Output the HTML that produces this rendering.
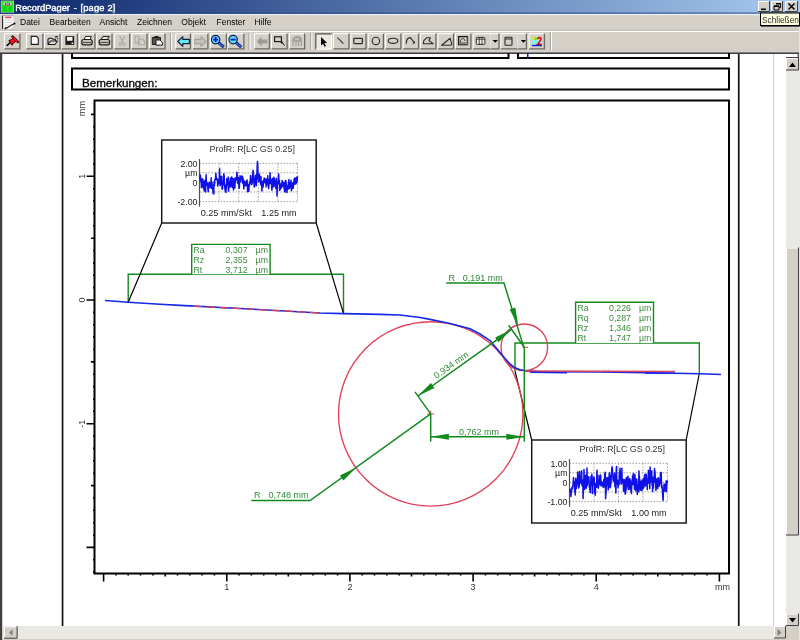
<!DOCTYPE html><html><head><meta charset="utf-8"><title>RecordPager</title><style>
*{margin:0;padding:0;box-sizing:border-box}
html,body{width:800px;height:640px;overflow:hidden;background:#d4d0c8;font-family:"Liberation Sans",sans-serif}
svg{position:absolute;left:0;top:0;will-change:transform}
</style></head><body><svg width="800" height="640" viewBox="0 0 800 640" font-family="Liberation Sans, sans-serif"><defs><linearGradient id="tg" x1="0" x2="1" y1="0" y2="0"><stop offset="0" stop-color="#0a246a"/><stop offset="1" stop-color="#a6caf0"/></linearGradient><pattern id="chk" width="2" height="2" patternUnits="userSpaceOnUse"><rect width="2" height="2" fill="#eeede9"/><rect width="1" height="1" fill="#e6e4df"/><rect x="1" y="1" width="1" height="1" fill="#e6e4df"/></pattern></defs><rect x="0" y="0" width="800" height="14" fill="url(#tg)"/><rect x="1.2" y="1" width="12.4" height="11.6" fill="#18e018" stroke="#a8e0a8" stroke-width="0.9"/><ellipse cx="5.2" cy="3.8" rx="2" ry="1.3" fill="#f0e4ec"/><ellipse cx="9.8" cy="3.8" rx="2" ry="1.3" fill="#f0e4ec"/><circle cx="5.6" cy="3.9" r="0.9" fill="#302838"/><circle cx="9.4" cy="3.9" r="0.9" fill="#302838"/><path d="M4.6 5.6 H10.4" stroke="#d05070" stroke-width="0.9"/><path d="M3.6 8 h2 M9 8 h2 M4.6 10.6 h1.4 M9 10.6 h1.4" stroke="#0a9a40" stroke-width="1"/><g fill="#fff" stroke="#fff" stroke-width="0.4" font-size="9.3"><text x="15.2" y="10.6">RecordPager</text><text x="73.8" y="10.6">-</text><text x="80.4" y="10.6" letter-spacing="0.2">[page 2]</text></g><rect x="0" y="14" width="800" height="16" fill="#d4d0c8"/><rect x="0" y="12.6" width="800" height="0.9" fill="#2a4a88"/><rect x="0" y="14" width="800" height="1.2" fill="#eceef2"/><path d="M2.6 15.5 H13.6 V26 L10 29 H2.6 Z" fill="#fcfcfc"/><path d="M2.6 15.5 V29" stroke="#303030" stroke-width="1.2"/><path d="M2.6 15.3 H13.8" stroke="#909090" stroke-width="0.8"/><rect x="5" y="16.6" width="6.4" height="1.6" fill="#f04060"/><path d="M4.6 20 H12 M4.6 22.6 H12 M4.6 25 H10" stroke="#c8c8c8" stroke-width="0.8"/><path d="M5.2 28.4 L7.8 27.4 L12.4 24.6 L14.8 23.4" stroke="#202020" stroke-width="1.2" fill="none"/><circle cx="14.6" cy="23.4" r="0.9" fill="#000"/><circle cx="5.4" cy="28.4" r="0.9" fill="#000"/><text x="20" y="25" font-size="8.5" fill="#000">Datei</text><text x="49.5" y="25" font-size="8.5" fill="#000">Bearbeiten</text><text x="99.5" y="25" font-size="8.5" fill="#000">Ansicht</text><text x="137" y="25" font-size="8.5" fill="#000">Zeichnen</text><text x="181.3" y="25" font-size="8.5" fill="#000">Objekt</text><text x="216.5" y="25" font-size="8.5" fill="#000">Fenster</text><text x="254.6" y="25" font-size="8.5" fill="#000">Hilfe</text><rect x="0" y="29.5" width="800" height="1.2" fill="#c2beb6"/><rect x="0" y="31" width="800" height="1" fill="#fff"/><path d="M4.4 49.0 V33.7 H19.5" stroke="#fff" stroke-width="1" fill="none"/><path d="M4.4 48.9 H19.9 V33.7" stroke="#6a6864" stroke-width="1.3" fill="none"/><path d="M7.2 45.4 L10.8 42" stroke="#000" stroke-width="1.6" stroke-linecap="round"/><path d="M8.8 40.6 L11.6 39.4 L13.4 37.4 L15.6 38.8 L17 41 L15.6 41.6 L13.4 43.2 L12.2 45.2 Z" fill="#ee1020" stroke="#200" stroke-width="0.9" stroke-linejoin="round"/><path d="M12.6 36.6 L17.8 41.8" stroke="#200" stroke-width="2.6" stroke-linecap="round"/><path d="M13 37.2 L17.2 41.4" stroke="#ff2030" stroke-width="1.4" stroke-linecap="round"/><path d="M26.5 49.0 V33.7 H42.5" stroke="#fff" stroke-width="1" fill="none"/><path d="M26.5 48.9 H42.9 V33.7" stroke="#6a6864" stroke-width="1.3" fill="none"/><path d="M31.2 36.4 H36.4 L38.3 38.3 V44.4 H31.2 Z" fill="#fff" stroke="#1c1c1c" stroke-width="1.1"/><path d="M44.5 49.0 V33.7 H59.6" stroke="#fff" stroke-width="1" fill="none"/><path d="M44.5 48.9 H60.0 V33.7" stroke="#6a6864" stroke-width="1.3" fill="none"/><path d="M48 44.5 V39.2 L49.5 38.3 H52 L53 39.3 H55.5 V41 M48 44.5 L50.5 41 H57.5 L55 44.5 Z" fill="#ddd" stroke="#1c1c1c" stroke-width="1.1" stroke-linejoin="round"/><path d="M55 37.2 L57.8 36.4 M57.2 38.6 l1 0" stroke="#1c1c1c" stroke-width="1.3"/><path d="M61.8 49.0 V33.7 H77.0" stroke="#fff" stroke-width="1" fill="none"/><path d="M61.8 48.9 H77.4 V33.7" stroke="#6a6864" stroke-width="1.3" fill="none"/><rect x="65.4" y="36.2" width="8.8" height="8.7" fill="#1c1c1c"/><rect x="67" y="37" width="5.5" height="3.8" fill="#f4f4f4"/><rect x="71.6" y="42.6" width="1.6" height="1.4" fill="#fff"/><path d="M79.5 49.0 V33.7 H94.5" stroke="#fff" stroke-width="1" fill="none"/><path d="M79.5 48.9 H94.9 V33.7" stroke="#6a6864" stroke-width="1.3" fill="none"/><path d="M84.2 39.5 L85.6 36.4 H91.4 L90 39.5 Z" fill="#fff" stroke="#1c1c1c" stroke-width="1"/><rect x="81.8" y="39.5" width="10.4" height="5.3" rx="2" fill="#c8c6c0" stroke="#1c1c1c" stroke-width="1.2"/><path d="M83 42.4 H91" stroke="#1c1c1c" stroke-width="0.8"/><path d="M96.8 49.0 V33.7 H111.6" stroke="#fff" stroke-width="1" fill="none"/><path d="M96.8 48.9 H112.0 V33.7" stroke="#6a6864" stroke-width="1.3" fill="none"/><path d="M101 39.5 L103 36.4 H109.4 L107.4 39.5 Z" fill="#ddd" stroke="#1c1c1c" stroke-width="1"/><rect x="99.2" y="39.5" width="10.4" height="5.3" rx="2" fill="#c8c6c0" stroke="#1c1c1c" stroke-width="1.2"/><path d="M100.4 42.4 H108.4" stroke="#1c1c1c" stroke-width="0.8"/><path d="M114.4 49.0 V33.7 H129.3" stroke="#fff" stroke-width="1" fill="none"/><path d="M114.4 48.9 H129.7 V33.7" stroke="#6a6864" stroke-width="1.3" fill="none"/><path d="M119.6 36 L123.4 43 M124.8 36 L121 43" stroke="#a8a6a0" stroke-width="1.1"/><circle cx="120.2" cy="44.3" r="1.3" fill="none" stroke="#a8a6a0" stroke-width="1"/><circle cx="124.2" cy="44.3" r="1.3" fill="none" stroke="#a8a6a0" stroke-width="1"/><path d="M131.7 49.0 V33.7 H146.6" stroke="#fff" stroke-width="1" fill="none"/><path d="M131.7 48.9 H147.0 V33.7" stroke="#6a6864" stroke-width="1.3" fill="none"/><path d="M135 36.2 H139 V43 H135 Z M138.5 39 H142.5 L144.6 41 V44.8 H138.5 Z" fill="none" stroke="#a8a6a0" stroke-width="1.1"/><path d="M149.5 49.0 V33.7 H164.6" stroke="#fff" stroke-width="1" fill="none"/><path d="M149.5 48.9 H165.0 V33.7" stroke="#6a6864" stroke-width="1.3" fill="none"/><path d="M152.3 37.5 H160.5 V44.5 H152.3 Z" fill="#555" stroke="#1c1c1c" stroke-width="1"/><rect x="154.5" y="36" width="4" height="2.2" fill="#1c1c1c"/><path d="M156 40 H160 L162.4 42.4 V45.2 H156 Z" fill="#f4f4f4" stroke="#1c1c1c" stroke-width="1"/><rect x="170.1" y="33" width="1" height="17" fill="#9c9890"/><rect x="171.1" y="33" width="1" height="17" fill="#fff"/><path d="M175.7 49.0 V33.7 H190.0" stroke="#fff" stroke-width="1" fill="none"/><path d="M175.7 48.9 H190.4 V33.7" stroke="#6a6864" stroke-width="1.3" fill="none"/><path d="M177.8 41.5 L182.8 36.6 V39.4 H189.4 V43.6 H182.8 V46.4 Z" fill="#62e8f0" stroke="#0c1c40" stroke-width="1.1" stroke-linejoin="round"/><path d="M193.0 49.0 V33.7 H207.5" stroke="#fff" stroke-width="1" fill="none"/><path d="M193.0 48.9 H207.9 V33.7" stroke="#6a6864" stroke-width="1.3" fill="none"/><path d="M206 41.5 L201 36.6 V39.4 H194.6 V43.6 H201 V46.4 Z" fill="#c4c2bc" stroke="#a4a29c" stroke-width="1.1" stroke-linejoin="round"/><path d="M210.5 49.0 V33.7 H226.0" stroke="#fff" stroke-width="1" fill="none"/><path d="M210.5 48.9 H226.4 V33.7" stroke="#6a6864" stroke-width="1.3" fill="none"/><path d="M218.6 42.6 L223.8 47.2" stroke="#0a1a60" stroke-width="3"/><path d="M219.0 43.0 L223.4 46.8" stroke="#3a6af0" stroke-width="1.5"/><circle cx="215.6" cy="39.6" r="4.2" fill="#5ee0e8" stroke="#0a1a60" stroke-width="1.2"/><path d="M213.1 39.6 h5 M215.6 37.1 v5" stroke="#0010e0" stroke-width="1.8"/><path d="M228.0 49.0 V33.7 H243.5" stroke="#fff" stroke-width="1" fill="none"/><path d="M228.0 48.9 H243.9 V33.7" stroke="#6a6864" stroke-width="1.3" fill="none"/><path d="M236.1 42.6 L241.3 47.2" stroke="#0a1a60" stroke-width="3"/><path d="M236.5 43.0 L240.9 46.8" stroke="#3a6af0" stroke-width="1.5"/><circle cx="233.1" cy="39.6" r="4.2" fill="#5ee0e8" stroke="#0a1a60" stroke-width="1.2"/><path d="M230.6 39.6 h5" stroke="#0010e0" stroke-width="1.8"/><rect x="248.5" y="33" width="1" height="17" fill="#9c9890"/><rect x="249.5" y="33" width="1" height="17" fill="#fff"/><path d="M254.4 49.0 V33.7 H269.0" stroke="#fff" stroke-width="1" fill="none"/><path d="M254.4 48.9 H269.4 V33.7" stroke="#6a6864" stroke-width="1.3" fill="none"/><path d="M256.8 41.4 L261.6 36.6 V39.4 H267.4 V43.4 H261.6 V46.2 Z" fill="#9c9a94"/><path d="M271.5 49.0 V33.7 H286.7" stroke="#fff" stroke-width="1" fill="none"/><path d="M271.5 48.9 H287.1 V33.7" stroke="#6a6864" stroke-width="1.3" fill="none"/><rect x="274.6" y="36.8" width="6.8" height="4.8" fill="none" stroke="#111" stroke-width="1.1"/><path d="M281 41 L284.6 45.6" stroke="#111" stroke-width="1"/><path d="M280.6 41.6 l2.6 0.4 l-2 2 z" fill="#111"/><path d="M289.5 49.0 V33.7 H304.3" stroke="#fff" stroke-width="1" fill="none"/><path d="M289.5 48.9 H304.7 V33.7" stroke="#6a6864" stroke-width="1.3" fill="none"/><path d="M293 40 Q293 36.6 297.2 36.6 Q301.4 36.6 301.4 40 V41 H293 Z M293 41.6 V46 M296 41.6 V46 M298.6 41.6 V46 M301.4 41.6 V46" fill="#a4a29c" stroke="#a4a29c" stroke-width="1.3"/><rect x="295" y="38.6" width="4" height="1.2" fill="#d4d0c8"/><rect x="310.3" y="33" width="1" height="17" fill="#9c9890"/><rect x="311.3" y="33" width="1" height="17" fill="#fff"/><rect x="315.2" y="33.2" width="16.8" height="16.3" fill="#ebe9e4"/><path d="M315.8 49.5 V33.8 H332.0" stroke="#505050" stroke-width="1.2" fill="none"/><path d="M316.2 49.0 H331.5 V34.2" stroke="#fff" stroke-width="1" fill="none"/><path d="M321 37 V45.6 L322.9 43.7 L324.6 46.8 L326 46 L324.4 43 H327.2 Z" fill="#000"/><path d="M333.5 49.0 V33.7 H348.6" stroke="#fff" stroke-width="1" fill="none"/><path d="M333.5 48.9 H349.0 V33.7" stroke="#6a6864" stroke-width="1.3" fill="none"/><path d="M337.4 37.6 L343.4 43.6" stroke="#333" stroke-width="1.1"/><path d="M350.9 49.0 V33.7 H365.6" stroke="#fff" stroke-width="1" fill="none"/><path d="M350.9 48.9 H366.0 V33.7" stroke="#6a6864" stroke-width="1.3" fill="none"/><rect x="353.8" y="38.3" width="8.6" height="5.3" rx="0.8" fill="none" stroke="#2a2a2a" stroke-width="1.2"/><path d="M368.4 49.0 V33.7 H383.0" stroke="#fff" stroke-width="1" fill="none"/><path d="M368.4 48.9 H383.4 V33.7" stroke="#6a6864" stroke-width="1.3" fill="none"/><circle cx="375.9" cy="40.9" r="3.7" fill="none" stroke="#2a2a2a" stroke-width="1.1"/><path d="M385.5 49.0 V33.7 H400.5" stroke="#fff" stroke-width="1" fill="none"/><path d="M385.5 48.9 H400.9 V33.7" stroke="#6a6864" stroke-width="1.3" fill="none"/><ellipse cx="393" cy="40.8" rx="4.8" ry="2.6" fill="none" stroke="#2a2a2a" stroke-width="1.1"/><path d="M403.3 49.0 V33.7 H418.2" stroke="#fff" stroke-width="1" fill="none"/><path d="M403.3 48.9 H418.6 V33.7" stroke="#6a6864" stroke-width="1.3" fill="none"/><path d="M406.4 43.6 Q406 38 410.4 37.6 L414.6 43 M414.6 43 l-0.6 -1.8 M414.6 43 l-1.8 0.4" fill="none" stroke="#2a2a2a" stroke-width="1.1"/><path d="M420.5 49.0 V33.7 H435.5" stroke="#fff" stroke-width="1" fill="none"/><path d="M420.5 48.9 H435.9 V33.7" stroke="#6a6864" stroke-width="1.3" fill="none"/><path d="M423.4 43.8 L423.8 40.6 L426.6 37.8 H430.4 L429 40.6 L433.2 43.8 Z" fill="none" stroke="#2a2a2a" stroke-width="1.1" stroke-linejoin="round"/><path d="M438.0 49.0 V33.7 H453.1" stroke="#fff" stroke-width="1" fill="none"/><path d="M438.0 48.9 H453.5 V33.7" stroke="#6a6864" stroke-width="1.3" fill="none"/><path d="M441.6 45.3 L450.2 38.3 L451.8 44.2 L451 45.3 Z" fill="none" stroke="#2a2a2a" stroke-width="1.1" stroke-linejoin="round"/><path d="M455.5 49.0 V33.7 H470.5" stroke="#fff" stroke-width="1" fill="none"/><path d="M455.5 48.9 H470.9 V33.7" stroke="#6a6864" stroke-width="1.3" fill="none"/><rect x="458.6" y="36.6" width="8.8" height="8" fill="none" stroke="#1a1a1a" stroke-width="1.3"/><path d="M460 42.8 Q460.4 38.4 462.6 38.4 Q464.6 38.4 465 41 M460 43 H466" fill="none" stroke="#333" stroke-width="0.9"/><path d="M459.3 44.9 H467.8 V37" stroke="#777" stroke-width="0.8" fill="none"/><path d="M473.2 49.0 V33.7 H498.6" stroke="#fff" stroke-width="1" fill="none"/><path d="M473.2 48.9 H499.0 V33.7" stroke="#6a6864" stroke-width="1.3" fill="none"/><rect x="476.3" y="37.4" width="8.6" height="7" rx="1" fill="#f2f2f2" stroke="#2a2a2a" stroke-width="1"/><path d="M476.3 39.2 H484.9 M479.2 37.4 V44.4 M482 37.4 V44.4" stroke="#2a2a2a" stroke-width="0.9"/><rect x="490.2" y="34" width="0.8" height="15" fill="#e6e4de"/><path d="M492.6 40 H497.9 L495.25 42.8 Z" fill="#000"/><path d="M500.9 49.0 V33.7 H526.0" stroke="#fff" stroke-width="1" fill="none"/><path d="M500.9 48.9 H526.4 V33.7" stroke="#6a6864" stroke-width="1.3" fill="none"/><rect x="505" y="37.2" width="7" height="8" rx="0.8" fill="none" stroke="#2a2a2a" stroke-width="1.1"/><path d="M505 39 H512" stroke="#2a2a2a" stroke-width="1"/><rect x="517.4" y="34" width="0.8" height="15" fill="#e6e4de"/><path d="M520.8 40 H526.1 L523.45 42.8 Z" fill="#000"/><path d="M529.1 49.0 V33.7 H544.0" stroke="#fff" stroke-width="1" fill="none"/><path d="M529.1 48.9 H544.4 V33.7" stroke="#6a6864" stroke-width="1.3" fill="none"/><rect x="532" y="37.6" width="10" height="7.2" fill="#8ef0f0"/><path d="M532.4 37.6 Q535 36.4 537.8 38 L536 40.6 Q533.6 40 532.4 39 Z" fill="#8ed020"/><circle cx="533.6" cy="38.2" r="1.2" fill="#f0f020"/><path d="M537.4 39 Q539.6 36.4 541 38.2 Q541.4 40 537.6 44.2 H541.6" fill="none" stroke="#e01010" stroke-width="1.6"/><rect x="532" y="44.8" width="10" height="1.4" fill="#1020d0"/><rect x="551" y="32" width="1" height="19" fill="#fff"/><rect x="550" y="32" width="1" height="19" fill="#a8a49c"/><rect x="0" y="52" width="800" height="1" fill="#808080"/><rect x="0" y="53" width="800" height="573" fill="#fff"/><rect x="0" y="53" width="2" height="587" fill="#404040"/><rect x="2" y="53" width="1" height="587" fill="#d4d0c8"/><rect x="0" y="53" width="800" height="1" fill="#404040"/><rect x="773" y="54" width="1" height="572" fill="#d4d0c8"/><rect x="61.7" y="54" width="1.7" height="572" fill="#111"/><rect x="737.9" y="54" width="1.7" height="572" fill="#111"/><path d="M72 53 V58 H508.5 V53" fill="none" stroke="#000" stroke-width="2"/><path d="M518 53 V58 H729 V53" fill="none" stroke="#000" stroke-width="2"/><rect x="527" y="53" width="1.5" height="5.5" fill="#1010c0"/><rect x="72" y="68.5" width="657" height="21" fill="none" stroke="#000" stroke-width="2"/><text x="82" y="86.8" font-size="11.6" fill="#000" stroke="#000" stroke-width="0.3">Bemerkungen:</text><path d="M94.5 100.5 H729 V573.5 H94.5 Z" fill="none" stroke="#000" stroke-width="2"/><path d="M103.6 573.5 v8 M115.9 573.5 v2 M128.2 573.5 v2 M140.5 573.5 v2 M152.9 573.5 v2 M165.2 573.5 v3 M177.5 573.5 v2 M189.8 573.5 v2 M202.1 573.5 v2 M214.4 573.5 v2 M226.8 573.5 v8 M239.1 573.5 v2 M251.4 573.5 v2 M263.7 573.5 v2 M276.0 573.5 v2 M288.3 573.5 v3 M300.6 573.5 v2 M313.0 573.5 v2 M325.3 573.5 v2 M337.6 573.5 v2 M349.9 573.5 v8 M362.2 573.5 v2 M374.5 573.5 v2 M386.8 573.5 v2 M399.2 573.5 v2 M411.5 573.5 v3 M423.8 573.5 v2 M436.1 573.5 v2 M448.4 573.5 v2 M460.7 573.5 v2 M473.1 573.5 v8 M485.4 573.5 v2 M497.7 573.5 v2 M510.0 573.5 v2 M522.3 573.5 v2 M534.6 573.5 v3 M546.9 573.5 v2 M559.3 573.5 v2 M571.6 573.5 v2 M583.9 573.5 v2 M596.2 573.5 v8 M608.5 573.5 v2 M620.8 573.5 v2 M633.1 573.5 v2 M645.5 573.5 v2 M657.8 573.5 v3 M670.1 573.5 v2 M682.4 573.5 v2 M694.7 573.5 v2 M707.0 573.5 v2 M719.4 573.5 v8 M94.5 572.1 h-1.5 M94.5 559.8 h-1.5 M94.5 547.4 h-8 M94.5 535.0 h-1.5 M94.5 522.7 h-1.5 M94.5 510.3 h-1.5 M94.5 497.9 h-1.5 M94.5 485.6 h-3.5 M94.5 473.2 h-1.5 M94.5 460.8 h-1.5 M94.5 448.4 h-1.5 M94.5 436.1 h-1.5 M94.5 423.7 h-8 M94.5 411.3 h-1.5 M94.5 399.0 h-1.5 M94.5 386.6 h-1.5 M94.5 374.2 h-1.5 M94.5 361.9 h-3.5 M94.5 349.5 h-1.5 M94.5 337.1 h-1.5 M94.5 324.7 h-1.5 M94.5 312.4 h-1.5 M94.5 300.0 h-8 M94.5 287.6 h-1.5 M94.5 275.3 h-1.5 M94.5 262.9 h-1.5 M94.5 250.5 h-1.5 M94.5 238.2 h-3.5 M94.5 225.8 h-1.5 M94.5 213.4 h-1.5 M94.5 201.0 h-1.5 M94.5 188.7 h-1.5 M94.5 176.3 h-8 M94.5 163.9 h-1.5 M94.5 151.6 h-1.5 M94.5 139.2 h-1.5 M94.5 126.8 h-1.5 M94.5 114.4 h-3.5" stroke="#000" stroke-width="1.6" fill="none"/><text x="226.8" y="590" font-size="9" fill="#333" text-anchor="middle">1</text><text x="349.9" y="590" font-size="9" fill="#333" text-anchor="middle">2</text><text x="473.1" y="590" font-size="9" fill="#333" text-anchor="middle">3</text><text x="596.2" y="590" font-size="9" fill="#333" text-anchor="middle">4</text><text x="722.5" y="590" font-size="9" fill="#333" text-anchor="middle">mm</text><text transform="translate(85 176.3) rotate(-90)" font-size="9" fill="#333" text-anchor="middle">1</text><text transform="translate(85 300.0) rotate(-90)" font-size="9" fill="#333" text-anchor="middle">0</text><text transform="translate(85 423.7) rotate(-90)" font-size="9" fill="#333" text-anchor="middle">-1</text><text transform="translate(85.2 108.5) rotate(-90)" font-size="9.2" fill="#333" text-anchor="middle">mm</text><path d="M128.2 302.3 V274.2 H343.5 V313.4" fill="none" stroke="#128a1c" stroke-width="1.4"/><path d="M515 371 V343 H699.3 V373.5" fill="none" stroke="#128a1c" stroke-width="1.4"/><path d="M128.2 302.3 L161.7 223 M343.5 313.4 L316.2 223 M515 371 L531.7 440 M699.3 373.5 L686.2 440" stroke="#000" stroke-width="1.2" fill="none"/><circle cx="430.7" cy="413.9" r="92.2" fill="none" stroke="#e0405a" stroke-width="1.35"/><circle cx="524.3" cy="347.3" r="23.3" fill="none" stroke="#e0405a" stroke-width="1.35"/><path d="M105.0 300.5 L128.0 302.3 L160.0 304.3 L180.0 305.4 L250.0 309.0 L320.0 313.0 L343.0 313.6 L380.0 314.4 L400.0 315.0 L420.0 317.5 L430.0 319.4 L450.0 323.5 L470.0 328.8 L480.0 334.0 L490.0 340.6 L500.0 352.5 L505.0 358.5 L510.0 364.0 L515.0 367.8 L520.0 369.8 L526.0 370.8 L540.0 371.8 L600.0 372.0 L660.0 373.0 L700.0 373.8 L721.0 374.5" fill="none" stroke="#1428e6" stroke-width="1.6" stroke-linejoin="round"/><path d="M193 306.1 L319.5 312.9" stroke="#e0405a" stroke-width="1.3" stroke-dasharray="9 4"/><path d="M524 371.1 L675 371.6" stroke="#e0405a" stroke-width="1.5"/><path d="M530 372.4 L567 372.7 M645 373 L675 373.2" stroke="#1428e6" stroke-width="1.4"/><path d="M603 370 h1 M605.5 370 h1 M608 370 h1" stroke="#888" stroke-width="0.8"/><path d="M427.2 413.9 h7 M430.7 410.6 v3 M522.5 347.3 h5.5" stroke="#e0405a" stroke-width="1"/><path d="M446.2 283 H504 L523.6 346.6" fill="none" stroke="#128a1c" stroke-width="1.5"/><path d="M518.2 325.5 L509.7 309.4 L515.3 307.5 Z" fill="#128a1c"/><text x="448.5" y="280.5" font-size="9" fill="#2f8a35">R</text><text x="462.8" y="280.5" font-size="9" fill="#2f8a35">0,191 mm</text><path d="M430.7 413.9 L415.0 391.9 M524.3 347.3 L508.6 325.3 M417.9 396.0 L511.5 329.4" stroke="#128a1c" stroke-width="1.5" fill="none"/><path d="M417.9 396.0 L430.9 383.1 L434.4 388.0 Z" fill="#128a1c"/><path d="M511.5 329.4 L498.6 342.3 L495.1 337.4 Z" fill="#128a1c"/><text transform="translate(452.9 367.4) rotate(-35.43)" font-size="9" fill="#2f8a35" text-anchor="middle">0,934 mm</text><path d="M430.7 413.9 V441.6 M524.3 347.3 V441.6 M430.7 436.8 H524.3" stroke="#128a1c" stroke-width="1.5" fill="none"/><path d="M430.9 436.8 L448.9 433.8 L448.9 439.8 Z" fill="#128a1c"/><path d="M524.3 436.8 L506.3 439.8 L506.3 433.8 Z" fill="#128a1c"/><text x="479" y="434.5" font-size="9" fill="#2f8a35" text-anchor="middle">0,762 mm</text><path d="M251.3 500.5 H310 L430.7 413.9" fill="none" stroke="#128a1c" stroke-width="1.5"/><path d="M356.3 467.5 L343.4 480.4 L339.9 475.5 Z" fill="#128a1c"/><text x="254" y="497.5" font-size="9" fill="#2f8a35">R</text><text x="268.5" y="497.5" font-size="9" fill="#2f8a35">0,748 mm</text><path d="M191.7 274.2 V244.4 H270.1 V274.2" fill="#fff" stroke="#128a1c" stroke-width="1.4"/><text x="193.5" y="253.4" font-size="8.8" fill="#3f8a3f">Ra</text><text x="247.6" y="253.4" font-size="8.8" fill="#3f8a3f" text-anchor="end">0,307</text><text x="255.6" y="253.4" font-size="8.8" fill="#3f8a3f">µm</text><text x="193.5" y="263.2" font-size="8.8" fill="#3f8a3f">Rz</text><text x="247.6" y="263.2" font-size="8.8" fill="#3f8a3f" text-anchor="end">2,355</text><text x="255.6" y="263.2" font-size="8.8" fill="#3f8a3f">µm</text><text x="193.5" y="273.0" font-size="8.8" fill="#3f8a3f">Rt</text><text x="247.6" y="273.0" font-size="8.8" fill="#3f8a3f" text-anchor="end">3,712</text><text x="255.6" y="273.0" font-size="8.8" fill="#3f8a3f">µm</text><path d="M575.6 343.0 V302.3 H653.5 V343.0" fill="#fff" stroke="#128a1c" stroke-width="1.4"/><text x="577.4" y="311.3" font-size="8.8" fill="#3f8a3f">Ra</text><text x="631.0" y="311.3" font-size="8.8" fill="#3f8a3f" text-anchor="end">0,226</text><text x="639.0" y="311.3" font-size="8.8" fill="#3f8a3f">µm</text><text x="577.4" y="321.1" font-size="8.8" fill="#3f8a3f">Rq</text><text x="631.0" y="321.1" font-size="8.8" fill="#3f8a3f" text-anchor="end">0,287</text><text x="639.0" y="321.1" font-size="8.8" fill="#3f8a3f">µm</text><text x="577.4" y="330.9" font-size="8.8" fill="#3f8a3f">Rz</text><text x="631.0" y="330.9" font-size="8.8" fill="#3f8a3f" text-anchor="end">1,346</text><text x="639.0" y="330.9" font-size="8.8" fill="#3f8a3f">µm</text><text x="577.4" y="340.7" font-size="8.8" fill="#3f8a3f">Rt</text><text x="631.0" y="340.7" font-size="8.8" fill="#3f8a3f" text-anchor="end">1,747</text><text x="639.0" y="340.7" font-size="8.8" fill="#3f8a3f">µm</text><rect x="161.7" y="140.0" width="154.5" height="83" fill="#fff" stroke="#151515" stroke-width="1.45"/><text x="294.9" y="152.3" font-size="8.9" fill="#333" text-anchor="end">ProfR: R[LC GS 0.25]</text><path d="M199.5 163.3 H297.5 M199.5 172.8 H297.5 M199.5 182.5 H297.5 M199.5 192.0 H297.5 M199.5 201.6 H297.5 M219.1 163.3 V202.5 M238.7 163.3 V202.5 M258.3 163.3 V202.5 M277.9 163.3 V202.5 M297.5 163.3 V202.5" stroke="#888" stroke-width="0.8" stroke-dasharray="1.5 1.5" fill="none"/><path d="M199.5 159.0 V206.6" stroke="#505050" stroke-width="1.2"/><text x="197.5" y="166.5" font-size="8.8" fill="#222" text-anchor="end">2.00</text><text x="197.5" y="176.0" font-size="8.8" fill="#222" text-anchor="end">µm</text><text x="197.5" y="185.7" font-size="8.8" fill="#222" text-anchor="end">0</text><text x="197.5" y="204.8" font-size="8.8" fill="#222" text-anchor="end">-2.00</text><path d="M199.8 176.8 L200.0 179.1 L200.3 174.9 L200.5 176.7 L200.7 181.2 L201.0 180.6 L201.2 178.8 L201.4 187.6 L201.7 183.1 L201.9 179.3 L202.1 180.7 L202.4 178.9 L202.6 178.8 L202.8 179.1 L203.1 187.8 L203.3 183.8 L203.5 183.1 L203.8 184.7 L204.0 190.2 L204.2 184.2 L204.5 180.8 L204.7 190.9 L204.9 180.4 L205.2 180.8 L205.4 184.7 L205.6 192.0 L205.8 183.1 L206.1 174.7 L206.3 183.0 L206.5 181.7 L206.8 181.9 L207.0 185.1 L207.2 185.4 L207.5 185.8 L207.7 183.4 L207.9 188.9 L208.2 191.6 L208.4 187.3 L208.6 184.1 L208.9 187.2 L209.1 187.4 L209.3 182.1 L209.6 182.3 L209.8 187.8 L210.0 185.6 L210.3 183.9 L210.5 185.3 L210.7 184.8 L211.0 184.8 L211.2 177.7 L211.4 188.5 L211.7 186.6 L211.9 182.0 L212.1 187.0 L212.4 186.3 L212.6 184.9 L212.8 188.1 L213.1 193.5 L213.3 189.1 L213.5 191.2 L213.8 193.9 L214.0 183.4 L214.2 181.4 L214.5 185.3 L214.7 180.3 L214.9 179.6 L215.2 180.2 L215.4 179.2 L215.6 177.4 L215.9 173.3 L216.1 176.5 L216.3 177.2 L216.5 178.6 L216.8 179.7 L217.0 178.6 L217.2 179.4 L217.5 180.8 L217.7 186.1 L217.9 180.2 L218.2 180.1 L218.4 180.1 L218.6 183.0 L218.9 183.8 L219.1 183.2 L219.3 177.5 L219.6 168.8 L219.8 177.6 L220.0 181.1 L220.3 185.8 L220.5 182.7 L220.7 179.8 L221.0 182.5 L221.2 176.4 L221.4 176.2 L221.7 176.3 L221.9 181.1 L222.1 189.3 L222.4 187.5 L222.6 188.3 L222.8 185.3 L223.1 184.6 L223.3 181.7 L223.5 181.4 L223.8 173.7 L224.0 175.4 L224.2 175.8 L224.5 183.7 L224.7 185.9 L224.9 188.5 L225.2 190.9 L225.4 185.2 L225.6 188.1 L225.9 192.4 L226.1 186.9 L226.3 189.0 L226.6 185.3 L226.8 178.8 L227.0 182.8 L227.2 180.9 L227.5 183.6 L227.7 182.5 L227.9 185.0 L228.2 177.0 L228.4 189.4 L228.6 191.1 L228.9 185.6 L229.1 181.6 L229.3 183.5 L229.6 186.6 L229.8 186.7 L230.0 186.6 L230.3 178.1 L230.5 178.0 L230.7 186.9 L231.0 186.0 L231.2 179.2 L231.4 179.2 L231.7 177.0 L231.9 177.7 L232.1 185.8 L232.4 183.6 L232.6 187.6 L232.8 185.5 L233.1 178.6 L233.3 179.2 L233.5 190.0 L233.8 182.6 L234.0 178.9 L234.2 185.9 L234.5 184.1 L234.7 183.0 L234.9 188.0 L235.2 177.8 L235.4 182.2 L235.6 178.3 L235.9 180.6 L236.1 179.3 L236.3 179.8 L236.6 177.4 L236.8 173.6 L237.0 172.2 L237.3 176.9 L237.5 179.1 L237.7 178.7 L237.9 183.6 L238.2 183.3 L238.4 177.7 L238.6 179.8 L238.9 184.4 L239.1 188.5 L239.3 187.9 L239.6 182.3 L239.8 179.9 L240.0 175.8 L240.3 179.5 L240.5 178.9 L240.7 181.8 L241.0 177.4 L241.2 178.6 L241.4 177.8 L241.7 176.3 L241.9 176.0 L242.1 176.5 L242.4 176.2 L242.6 182.6 L242.8 183.1 L243.1 178.2 L243.3 183.3 L243.5 184.3 L243.8 189.0 L244.0 184.7 L244.2 183.2 L244.5 180.9 L244.7 183.2 L244.9 185.4 L245.2 185.1 L245.4 183.4 L245.6 185.9 L245.9 185.1 L246.1 185.4 L246.3 181.2 L246.6 184.0 L246.8 180.5 L247.0 179.9 L247.3 183.4 L247.5 191.8 L247.7 190.7 L248.0 186.7 L248.2 184.6 L248.4 188.2 L248.7 190.8 L248.9 191.2 L249.1 186.1 L249.3 185.7 L249.6 183.6 L249.8 183.0 L250.0 180.7 L250.3 182.1 L250.5 175.5 L250.7 176.7 L251.0 183.0 L251.2 180.2 L251.4 184.6 L251.7 179.3 L251.9 180.8 L252.1 184.1 L252.4 178.9 L252.6 174.7 L252.8 174.2 L253.1 170.3 L253.3 173.5 L253.5 177.5 L253.8 182.2 L254.0 182.6 L254.2 186.5 L254.5 187.0 L254.7 182.8 L254.9 181.5 L255.2 177.0 L255.4 175.2 L255.6 177.3 L255.9 183.4 L256.1 183.3 L256.3 185.7 L256.6 180.7 L256.8 174.3 L257.0 171.1 L257.3 163.6 L257.5 161.5 L257.7 166.7 L258.0 173.8 L258.2 178.3 L258.4 179.9 L258.7 181.7 L258.9 180.5 L259.1 177.2 L259.4 174.3 L259.6 175.0 L259.8 177.6 L260.0 180.0 L260.3 180.5 L260.5 183.4 L260.7 184.3 L261.0 176.8 L261.2 185.2 L261.4 184.1 L261.7 182.1 L261.9 191.0 L262.1 186.4 L262.4 181.6 L262.6 182.4 L262.8 185.0 L263.1 186.9 L263.3 184.3 L263.5 180.5 L263.8 179.8 L264.0 179.1 L264.2 178.0 L264.5 181.5 L264.7 181.0 L264.9 182.8 L265.2 180.2 L265.4 179.1 L265.6 181.3 L265.9 181.4 L266.1 186.9 L266.3 181.3 L266.6 183.4 L266.8 183.2 L267.0 178.4 L267.3 184.2 L267.5 184.2 L267.7 175.8 L268.0 182.7 L268.2 186.4 L268.4 181.2 L268.7 188.5 L268.9 185.4 L269.1 179.4 L269.4 183.6 L269.6 181.6 L269.8 177.3 L270.1 172.8 L270.3 179.9 L270.5 178.7 L270.7 183.4 L271.0 184.0 L271.2 180.8 L271.4 179.6 L271.7 187.6 L271.9 190.2 L272.1 187.5 L272.4 182.5 L272.6 178.4 L272.8 179.1 L273.1 186.9 L273.3 185.2 L273.5 181.8 L273.8 177.2 L274.0 180.7 L274.2 178.1 L274.5 180.4 L274.7 184.0 L274.9 186.4 L275.2 183.9 L275.4 181.3 L275.6 182.5 L275.9 188.7 L276.1 185.7 L276.3 178.2 L276.6 186.5 L276.8 184.7 L277.0 195.9 L277.3 185.5 L277.5 183.3 L277.7 181.8 L278.0 183.9 L278.2 181.2 L278.4 177.0 L278.7 174.0 L278.9 179.7 L279.1 180.3 L279.4 180.4 L279.6 190.4 L279.8 189.2 L280.1 189.9 L280.3 184.5 L280.5 185.6 L280.8 184.2 L281.0 183.8 L281.2 187.3 L281.4 188.1 L281.7 187.3 L281.9 186.6 L282.1 180.6 L282.4 181.2 L282.6 185.5 L282.8 184.4 L283.1 182.5 L283.3 186.1 L283.5 182.7 L283.8 182.5 L284.0 188.2 L284.2 185.6 L284.5 191.3 L284.7 190.0 L284.9 190.6 L285.2 192.0 L285.4 180.4 L285.6 184.0 L285.9 180.8 L286.1 182.7 L286.3 184.6 L286.6 190.2 L286.8 187.4 L287.0 192.5 L287.3 186.3 L287.5 185.8 L287.7 186.1 L288.0 189.3 L288.2 186.7 L288.4 183.6 L288.7 183.5 L288.9 179.4 L289.1 187.6 L289.4 188.5 L289.6 187.6 L289.8 186.6 L290.1 182.9 L290.3 182.3 L290.5 186.3 L290.8 181.8 L291.0 180.2 L291.2 188.1 L291.5 190.7 L291.7 186.9 L291.9 186.3 L292.1 184.7 L292.4 188.6 L292.6 183.0 L292.8 182.9 L293.1 184.2 L293.3 188.1 L293.5 183.2 L293.8 183.2 L294.0 180.5 L294.2 178.8 L294.5 178.2 L294.7 180.6 L294.9 184.3 L295.2 179.9 L295.4 178.6 L295.6 178.8 L295.9 181.6 L296.1 183.8 L296.3 177.5 L296.6 181.1 L296.8 177.5 L297.0 182.4 L297.3 178.1 L297.5 176.2" fill="none" stroke="#1010e8" stroke-width="1.5" stroke-linejoin="round"/><text x="200.7" y="216.3" font-size="9.1" fill="#222">0.25 mm/Skt</text><text x="296.7" y="216.3" font-size="9.1" fill="#222" text-anchor="end">1.25 mm</text><rect x="531.7" y="440.0" width="154.5" height="83" fill="#fff" stroke="#151515" stroke-width="1.45"/><text x="664.9" y="452.3" font-size="8.9" fill="#333" text-anchor="end">ProfR: R[LC GS 0.25]</text><path d="M569.5 463.3 H667.5 M569.5 472.8 H667.5 M569.5 482.5 H667.5 M569.5 492.0 H667.5 M569.5 501.6 H667.5 M594.0 463.3 V502.5 M618.5 463.3 V502.5 M643.0 463.3 V502.5 M667.5 463.3 V502.5" stroke="#888" stroke-width="0.8" stroke-dasharray="1.5 1.5" fill="none"/><path d="M569.5 459.0 V506.6" stroke="#505050" stroke-width="1.2"/><text x="567.5" y="466.5" font-size="8.8" fill="#222" text-anchor="end">1.00</text><text x="567.5" y="476.0" font-size="8.8" fill="#222" text-anchor="end">µm</text><text x="567.5" y="485.7" font-size="8.8" fill="#222" text-anchor="end">0</text><text x="567.5" y="504.8" font-size="8.8" fill="#222" text-anchor="end">-1.00</text><path d="M569.8 488.8 L570.0 488.8 L570.3 491.1 L570.5 492.0 L570.7 494.1 L571.0 496.4 L571.2 491.6 L571.4 492.3 L571.7 489.6 L571.9 488.6 L572.1 486.9 L572.4 489.1 L572.6 488.4 L572.8 487.0 L573.1 483.8 L573.3 480.7 L573.5 477.6 L573.8 481.8 L574.0 481.8 L574.2 485.7 L574.5 481.7 L574.7 491.4 L574.9 488.9 L575.2 494.9 L575.4 488.0 L575.6 483.1 L575.8 478.2 L576.1 485.1 L576.3 488.7 L576.5 485.4 L576.8 485.5 L577.0 482.1 L577.2 480.1 L577.5 480.1 L577.7 471.9 L577.9 473.5 L578.2 479.6 L578.4 482.1 L578.6 488.0 L578.9 487.7 L579.1 486.6 L579.3 484.3 L579.6 471.5 L579.8 479.0 L580.0 476.8 L580.3 483.2 L580.5 481.4 L580.7 480.6 L581.0 479.2 L581.2 480.0 L581.4 471.7 L581.7 470.7 L581.9 484.8 L582.1 485.7 L582.4 481.5 L582.6 480.5 L582.8 480.1 L583.1 498.6 L583.3 491.0 L583.5 485.6 L583.8 480.2 L584.0 469.6 L584.2 478.7 L584.5 488.4 L584.7 489.4 L584.9 486.2 L585.2 480.6 L585.4 475.6 L585.6 480.3 L585.9 479.4 L586.1 475.3 L586.3 488.2 L586.5 479.3 L586.8 478.1 L587.0 468.1 L587.2 485.8 L587.5 482.2 L587.7 481.4 L587.9 482.9 L588.2 477.5 L588.4 476.7 L588.6 481.1 L588.9 476.9 L589.1 481.2 L589.3 487.3 L589.6 487.1 L589.8 490.3 L590.0 489.6 L590.3 492.8 L590.5 486.4 L590.7 484.8 L591.0 476.4 L591.2 478.1 L591.4 475.9 L591.7 478.5 L591.9 474.3 L592.1 479.9 L592.4 493.6 L592.6 481.0 L592.8 483.6 L593.1 484.8 L593.3 478.2 L593.5 478.1 L593.8 477.0 L594.0 481.6 L594.2 477.7 L594.5 493.1 L594.7 489.6 L594.9 489.8 L595.2 495.3 L595.4 493.2 L595.6 484.8 L595.9 484.4 L596.1 482.7 L596.3 483.3 L596.6 487.3 L596.8 473.4 L597.0 470.3 L597.2 476.3 L597.5 482.5 L597.7 479.9 L597.9 480.6 L598.2 487.7 L598.4 488.1 L598.6 484.3 L598.9 481.9 L599.1 475.2 L599.3 483.1 L599.6 484.0 L599.8 478.9 L600.0 484.7 L600.3 482.4 L600.5 481.8 L600.7 474.9 L601.0 485.7 L601.2 481.0 L601.4 484.9 L601.7 485.9 L601.9 482.3 L602.1 483.6 L602.4 483.2 L602.6 483.0 L602.8 485.3 L603.1 481.8 L603.3 487.4 L603.5 486.5 L603.8 479.5 L604.0 485.2 L604.2 483.0 L604.5 486.7 L604.7 473.4 L604.9 482.6 L605.2 472.3 L605.4 478.0 L605.6 498.8 L605.9 492.9 L606.1 492.7 L606.3 483.4 L606.6 477.9 L606.8 481.3 L607.0 485.0 L607.3 483.5 L607.5 479.8 L607.7 477.4 L607.9 478.9 L608.2 489.9 L608.4 485.2 L608.6 481.5 L608.9 480.6 L609.1 476.6 L609.3 473.0 L609.6 479.5 L609.8 487.8 L610.0 486.2 L610.3 475.8 L610.5 487.0 L610.7 484.4 L611.0 483.0 L611.2 477.8 L611.4 472.1 L611.7 470.8 L611.9 467.8 L612.1 466.8 L612.4 469.7 L612.6 473.2 L612.8 475.5 L613.1 480.6 L613.3 480.7 L613.5 476.9 L613.8 476.0 L614.0 482.1 L614.2 481.6 L614.5 473.1 L614.7 477.6 L614.9 486.8 L615.2 482.5 L615.4 474.9 L615.6 484.7 L615.9 493.1 L616.1 483.8 L616.3 467.9 L616.6 466.6 L616.8 483.7 L617.0 479.0 L617.3 482.0 L617.5 482.3 L617.7 480.5 L618.0 487.8 L618.2 482.8 L618.4 483.2 L618.6 481.9 L618.9 481.3 L619.1 484.8 L619.3 477.4 L619.6 472.6 L619.8 472.6 L620.0 468.2 L620.3 472.5 L620.5 474.1 L620.7 479.7 L621.0 482.2 L621.2 484.2 L621.4 477.9 L621.7 478.9 L621.9 468.2 L622.1 480.8 L622.4 483.0 L622.6 481.9 L622.8 481.8 L623.1 479.6 L623.3 480.6 L623.5 491.3 L623.8 482.1 L624.0 479.6 L624.2 485.0 L624.5 484.6 L624.7 480.1 L624.9 490.5 L625.2 494.3 L625.4 485.3 L625.6 493.5 L625.9 479.6 L626.1 490.2 L626.3 477.4 L626.6 483.5 L626.8 482.9 L627.0 481.6 L627.3 486.4 L627.5 479.8 L627.7 478.6 L628.0 476.3 L628.2 489.3 L628.4 482.9 L628.7 485.7 L628.9 483.6 L629.1 489.6 L629.4 480.8 L629.6 478.6 L629.8 479.0 L630.0 483.6 L630.3 480.1 L630.5 485.4 L630.7 487.7 L631.0 491.1 L631.2 489.6 L631.4 493.6 L631.7 485.9 L631.9 482.3 L632.1 480.1 L632.4 479.3 L632.6 475.7 L632.8 483.4 L633.1 484.6 L633.3 473.4 L633.5 479.9 L633.8 478.9 L634.0 477.6 L634.2 480.4 L634.5 489.2 L634.7 486.5 L634.9 474.4 L635.2 482.4 L635.4 478.8 L635.6 490.8 L635.9 483.8 L636.1 483.4 L636.3 482.6 L636.6 479.0 L636.8 480.0 L637.0 481.8 L637.3 494.5 L637.5 488.1 L637.7 487.8 L638.0 485.6 L638.2 485.3 L638.4 485.9 L638.7 491.8 L638.9 470.9 L639.1 475.7 L639.4 476.3 L639.6 485.3 L639.8 479.8 L640.1 487.0 L640.3 490.3 L640.5 482.8 L640.7 485.9 L641.0 481.6 L641.2 486.8 L641.4 487.0 L641.7 490.5 L641.9 489.8 L642.1 479.9 L642.4 489.3 L642.6 485.1 L642.8 489.0 L643.1 485.2 L643.3 488.2 L643.5 478.2 L643.8 487.8 L644.0 479.0 L644.2 480.2 L644.5 483.8 L644.7 474.7 L644.9 481.3 L645.2 481.7 L645.4 485.9 L645.6 482.6 L645.9 476.6 L646.1 474.0 L646.3 474.4 L646.6 479.5 L646.8 479.6 L647.0 483.6 L647.3 489.7 L647.5 482.4 L647.7 478.8 L648.0 482.0 L648.2 483.3 L648.4 470.3 L648.7 473.4 L648.9 478.3 L649.1 482.6 L649.4 478.5 L649.6 474.2 L649.8 488.7 L650.1 466.9 L650.3 482.6 L650.5 477.4 L650.8 476.9 L651.0 478.6 L651.2 481.0 L651.4 475.1 L651.7 470.8 L651.9 478.1 L652.1 485.5 L652.4 480.2 L652.6 491.5 L652.8 477.2 L653.1 483.1 L653.3 483.4 L653.5 487.9 L653.8 477.1 L654.0 482.3 L654.2 480.3 L654.5 468.5 L654.7 473.9 L654.9 470.7 L655.2 475.3 L655.4 482.0 L655.6 480.8 L655.9 490.5 L656.1 488.0 L656.3 480.7 L656.6 479.5 L656.8 483.0 L657.0 478.5 L657.3 483.8 L657.5 485.9 L657.7 488.7 L658.0 485.8 L658.2 484.7 L658.4 477.8 L658.7 482.5 L658.9 482.5 L659.1 484.2 L659.4 486.1 L659.6 481.2 L659.8 481.1 L660.1 479.5 L660.3 476.7 L660.5 472.5 L660.8 475.0 L661.0 483.7 L661.2 472.5 L661.5 482.9 L661.7 487.8 L661.9 485.5 L662.1 486.9 L662.4 489.5 L662.6 494.5 L662.8 497.8 L663.1 500.3 L663.3 494.6 L663.5 490.5 L663.8 489.4 L664.0 484.7 L664.2 484.0 L664.5 491.1 L664.7 490.9 L664.9 484.7 L665.2 487.4 L665.4 485.1 L665.6 489.9 L665.9 487.9 L666.1 480.9 L666.3 491.7 L666.6 486.2 L666.8 484.8 L667.0 480.7 L667.3 482.4 L667.5 480.9" fill="none" stroke="#1010e8" stroke-width="1.5" stroke-linejoin="round"/><text x="570.7" y="516.3" font-size="9.1" fill="#222">0.25 mm/Skt</text><text x="666.7" y="516.3" font-size="9.1" fill="#222" text-anchor="end">1.00 mm</text><rect x="786" y="58" width="13" height="568" fill="url(#chk)"/><rect x="786" y="57" width="13" height="1" fill="#404040"/><rect x="797.6" y="53" width="1.2" height="5" fill="#404040"/><rect x="786" y="58" width="13" height="12.5" fill="#d4d0c8"/><path d="M786.5 69.5 V58.5 H798" stroke="#fff" stroke-width="1" fill="none"/><path d="M786 70.0 H798.5 V58" stroke="#404040" stroke-width="1" fill="none"/><path d="M789 67 L792.5 62.5 L796 67 Z" fill="#000"/><rect x="786" y="247.5" width="13" height="288" fill="#d4d0c8"/><path d="M786.5 534.5 V248.0 H798" stroke="#fff" stroke-width="1" fill="none"/><path d="M786 535.0 H798.5 V247.5" stroke="#404040" stroke-width="1" fill="none"/><rect x="786" y="613.5" width="13" height="12.5" fill="#d4d0c8"/><path d="M786.5 625.0 V614.0 H798" stroke="#fff" stroke-width="1" fill="none"/><path d="M786 625.5 H798.5 V613.5" stroke="#404040" stroke-width="1" fill="none"/><path d="M789 618 L792.5 622.5 L796 618 Z" fill="#000"/><rect x="3" y="626" width="783" height="13" fill="url(#chk)"/><rect x="4" y="626.3" width="13.6" height="12.4" fill="#d4d0c8"/><path d="M4.5 637.6999999999999 V626.8 H16.6" stroke="#fff" stroke-width="1" fill="none"/><path d="M4 638.1999999999999 H17.1 V626.3" stroke="#404040" stroke-width="1" fill="none"/><path d="M12.6 629.4 L9 632.6 L12.6 635.8 Z" fill="#808080"/><path d="M12.8 636 L13.4 635.4" stroke="#fff" stroke-width="0.8"/><rect x="774" y="626" width="12" height="12.5" fill="#d4d0c8"/><path d="M774.5 637.5 V626.5 H785" stroke="#fff" stroke-width="1" fill="none"/><path d="M774 638.0 H785.5 V626" stroke="#404040" stroke-width="1" fill="none"/><path d="M777.5 629 L781.5 632.5 L777.5 636 Z" fill="#808080"/><rect x="786" y="626" width="13" height="14" fill="#d4d0c8"/><rect x="799" y="14" width="1" height="626" fill="#e8e6e0"/><rect x="758" y="1" width="12" height="11" fill="#d4d0c8"/><path d="M758.5 11 V1.5 H769" stroke="#fff" stroke-width="1" fill="none"/><path d="M758 11.5 H769.5 V1" stroke="#404040" stroke-width="1" fill="none"/><rect x="771" y="1" width="12" height="11" fill="#d4d0c8"/><path d="M771.5 11 V1.5 H782" stroke="#fff" stroke-width="1" fill="none"/><path d="M771 11.5 H782.5 V1" stroke="#404040" stroke-width="1" fill="none"/><rect x="785" y="1" width="13" height="11" fill="#d4d0c8"/><path d="M785.5 11 V1.5 H797" stroke="#fff" stroke-width="1" fill="none"/><path d="M785 11.5 H797.5 V1" stroke="#404040" stroke-width="1" fill="none"/><rect x="761" y="8.5" width="5" height="1.6" fill="#000"/><path d="M774 6 h5 v4 h-5 z M776 3.5 h4.6 v4.2 h-1.6" fill="none" stroke="#000" stroke-width="1"/><path d="M774 6.3 h5 M776 3.8 h4.6" stroke="#000" stroke-width="1.4"/><path d="M788.5 3.5 L794.5 9.5 M794.5 3.5 L788.5 9.5" stroke="#000" stroke-width="1.5"/><rect x="761" y="25" width="39" height="2" fill="#5a5a5a"/><rect x="760.5" y="13" width="39" height="12.5" fill="#ffffe1" stroke="#000" stroke-width="1"/><text x="762" y="22.6" font-size="8.3" fill="#303030">Schließen</text></svg></body></html>
